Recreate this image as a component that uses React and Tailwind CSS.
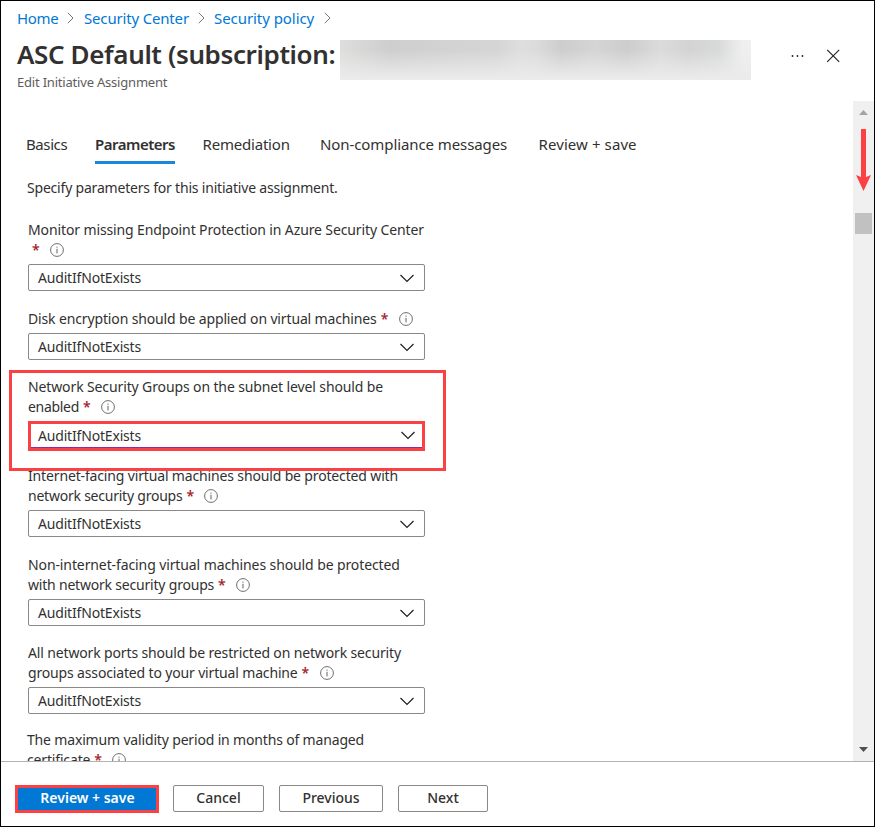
const FIELDS = [
  {
    gap: "mt-0",
    lines: [
      { text: "Monitor missing Endpoint Protection in Azure Security Center", track: "tracking-[-0.12px]" },
      { text: "", required: true },
    ],
  },
  {
    gap: "mt-[18px]",
    lines: [{ text: "Disk encryption should be applied on virtual machines", track: "tracking-[-0.14px]", required: true }],
  },
  {
    gap: "mt-[17px]",
    highlighted: true,
    lines: [
      { text: "Network Security Groups on the subnet level should be", track: "tracking-[-0.12px]" },
      { text: "enabled", track: "tracking-[-0.3px]", required: true },
    ],
  },
  {
    gap: "mt-[15px]",
    lines: [
      { text: "Internet-facing virtual machines should be protected with", track: "tracking-[-0.15px]" },
      { text: "network security groups", track: "tracking-[-0.23px]", required: true },
    ],
  },
  {
    gap: "mt-[18px]",
    lines: [
      { text: "Non-internet-facing virtual machines should be protected", track: "tracking-[-0.105px]" },
      { text: "with network security groups", track: "tracking-[-0.2px]", required: true },
    ],
  },
  {
    gap: "mt-[17px]",
    lines: [
      { text: "All network ports should be restricted on network security", track: "tracking-[-0.145px]" },
      { text: "groups associated to your virtual machine", track: "tracking-[-0.155px]", required: true },
    ],
  },
];

function Crumb({ children, className }) {
  return <a className={`text-[#0078d4] ${className}`}>{children}</a>;
}

function CrumbArrow({ className }) {
  return (
    <svg className={`shrink-0 ${className}`} width="7" height="12" viewBox="0 0 7 12" fill="none" stroke="#767676">
      <path d="M0.8 0.8 6 6 0.8 11.2" />
    </svg>
  );
}

function InfoIcon() {
  return (
    <svg className="ml-[11px] shrink-0" width="14" height="14" viewBox="0 0 14 14" fill="none" stroke="#605e5c">
      <circle cx="7" cy="7" r="6.4" strokeWidth="0.9" />
      <path d="M7 5.8V10.4M7 3.6V4.7" />
    </svg>
  );
}

function LabelLine({ text, track = "", required }) {
  return (
    <div className="flex h-5 items-center whitespace-nowrap">
      <span className={track}>{text}</span>
      {required && (
        <>
          <span className="ml-1 w-[7px] text-[14px] font-semibold leading-5 text-[#a4262c]">*</span>
          <InfoIcon />
        </>
      )}
    </div>
  );
}

function Select({ highlighted }) {
  const box = highlighted
    ? "h-[30px] border-[3px] border-[#fc4144] pl-[7px] pr-[7px] shadow-[inset_0_-1px_0_#8a2da5]"
    : "h-[27px] rounded-[2px] border border-[#8a8886] pl-[9px] pr-[10px]";
  return (
    <div className={`mt-1 flex w-[397px] items-center justify-between bg-white ${box}`}>
      <span className="tracking-[-0.18px] leading-5">AuditIfNotExists</span>
      <svg className={highlighted ? "-mt-px" : "mt-[2px]"} width="14" height="9" viewBox="0 0 14 9" fill="none" stroke="#201f1e" strokeWidth="1.2">
        <path d="M0.5 1 7 7.5 13.5 1" />
      </svg>
    </div>
  );
}

function Field({ gap, lines, highlighted }) {
  return (
    <div className={`relative ${gap}`}>
      {lines.map((l, i) => (
        <LabelLine key={i} {...l} />
      ))}
      <Select highlighted={highlighted} />
      {highlighted && (
        <div className="absolute -left-[19px] -top-[7px] z-10 h-[101px] w-[437px] border-[3px] border-[#fc4144]" />
      )}
    </div>
  );
}

function Button({ children, className }) {
  return (
    <button className={`flex h-[27px] items-center justify-center rounded-[2px] border border-[#8a8886] bg-white pb-px font-medium ${className}`}>
      {children}
    </button>
  );
}

function Scrollbar() {
  return (
    <div className="flex w-[21px] shrink-0 flex-col items-center bg-[#f0f0f0]">
      <svg className="mt-[9px] shrink-0" width="9" height="5" viewBox="0 0 9 5" fill="#a3a3a3">
        <path d="M4.5 0 9 5H0Z" />
      </svg>
      <svg className="mt-[14px] shrink-0" width="15" height="62" viewBox="0 0 15 62" fill="#fc4144">
        <path d="M5 0H10V48L15 46 7.500 62 0 46 5 48Z" />
      </svg>
      <div className="mt-[22px] h-[21px] w-[17px] shrink-0 bg-[#c1c1c1]" />
      <svg className="mb-[9px] mt-auto shrink-0" width="9" height="5" viewBox="0 0 9 5" fill="#505050">
        <path d="M0 0H9L4.500 5Z" />
      </svg>
    </div>
  );
}

export default function App() {
  return (
    <div className="flex h-[827px] w-[875px] flex-col overflow-hidden border border-black bg-white font-['Noto_Sans','Open_Sans',sans-serif] text-[14px] leading-5 text-[#323130]">
      <header className="h-[100px] shrink-0 pl-4">
        <nav className="flex h-[34px] items-center whitespace-nowrap text-[15px]">
          <Crumb className="w-[41px] tracking-[-0.35px]">Home</Crumb>
          <CrumbArrow className="ml-[9px]" />
          <Crumb className="ml-[10px] w-[105px] tracking-[-0.17px]">Security Center</Crumb>
          <CrumbArrow className="ml-[9px]" />
          <Crumb className="ml-[9px] w-[101px] tracking-[-0.06px]">Security policy</Crumb>
          <CrumbArrow className="ml-[9px]" />
        </nav>
        <div className="flex h-[40px] items-center pt-px">
          <h1 className="w-[323px] whitespace-nowrap pb-[3px] text-[26px] font-semibold leading-10 tracking-[-0.38px]">ASC Default (subscription:</h1>
          <div className="mt-[9px] h-10 w-[411px] bg-[linear-gradient(to_bottom,transparent_25%,#ebebeb_95%),linear-gradient(to_right,#dededd,#cecece_12%,#d3d3d3_28%,#d5d5d5_38%,#dedede_44%,#dbdbdb_48%,#cdcdcd_54%,#d5d5d5_62%,#cdcdcd_70%,#dbdbdb_78%,#d3d3d3_85%,#d8dad9_92%,#efefef_98%)]" />
          <svg className="ml-[39px] mt-0" width="14" height="4" viewBox="0 0 14 4" fill="#201f1e">
            <circle cx="2.500" cy="2" r="0.9" />
            <circle cx="7.500" cy="2" r="0.9" />
            <circle cx="12.500" cy="2" r="0.9" />
          </svg>
          <svg className="ml-[22px] mt-0" width="14" height="14" viewBox="0 0 14 14" fill="none" stroke="#201f1e" strokeWidth="1.1">
            <path d="M1.200 0.800 13.200 12.800M13.200 0.800 1.200 12.800" />
          </svg>
        </div>
        <p className="h-4 text-[13px] leading-[14px] tracking-[-0.2px] text-[#605e5c]">Edit Initiative Assignment</p>
      </header>

      <div className="flex min-h-0 flex-1">
        <main className="min-w-0 flex-1 overflow-hidden pl-[27px]">
          <div className="-ml-[2px] mt-[33px] flex h-[30px] whitespace-nowrap text-[15px]">
            <span className="w-[69px] tracking-[-0.4px]">Basics</span>
            <span className="w-[80px] border-b-[3px] border-[#1c86da] font-semibold tracking-[-0.5px]">Parameters</span>
            <span className="ml-[27.500px] w-[117px] tracking-[-0.2px]">Remediation</span>
            <span className="ml-[0.500px] w-[218.500px] tracking-[-0.09px]">Non-compliance messages</span>
            <span className="tracking-[0.09px]">Review + save</span>
          </div>
          <p className="-ml-px mt-[14px] tracking-[-0.2px]">Specify parameters for this initiative assignment.</p>
          <div className="mt-[22px]">
            {FIELDS.map((f) => (
              <Field key={f.lines[0].text} {...f} />
            ))}
            <div className="-ml-px mt-4">
              <LabelLine text="The maximum validity period in months of managed" track="tracking-[-0.165px]" />
              <LabelLine text="certificate" track="tracking-[-0.16px]" required />
            </div>
          </div>
        </main>
        <Scrollbar />
      </div>

      <footer className="flex h-[65px] shrink-0 items-start border-t border-[#b3b2b1] pl-[14px] pt-[23px]">
        <button className="flex h-7 w-[144px] items-center justify-center border-[3px] border-[#fc4144] bg-[#0078d4] pb-[2px] pl-px font-semibold text-white">
          Review + save
        </button>
        <Button className="ml-[14px] w-[91px]">Cancel</Button>
        <Button className="ml-[15px] w-[104px]">Previous</Button>
        <Button className="ml-[15px] w-[90px]">Next</Button>
      </footer>
    </div>
  );
}
